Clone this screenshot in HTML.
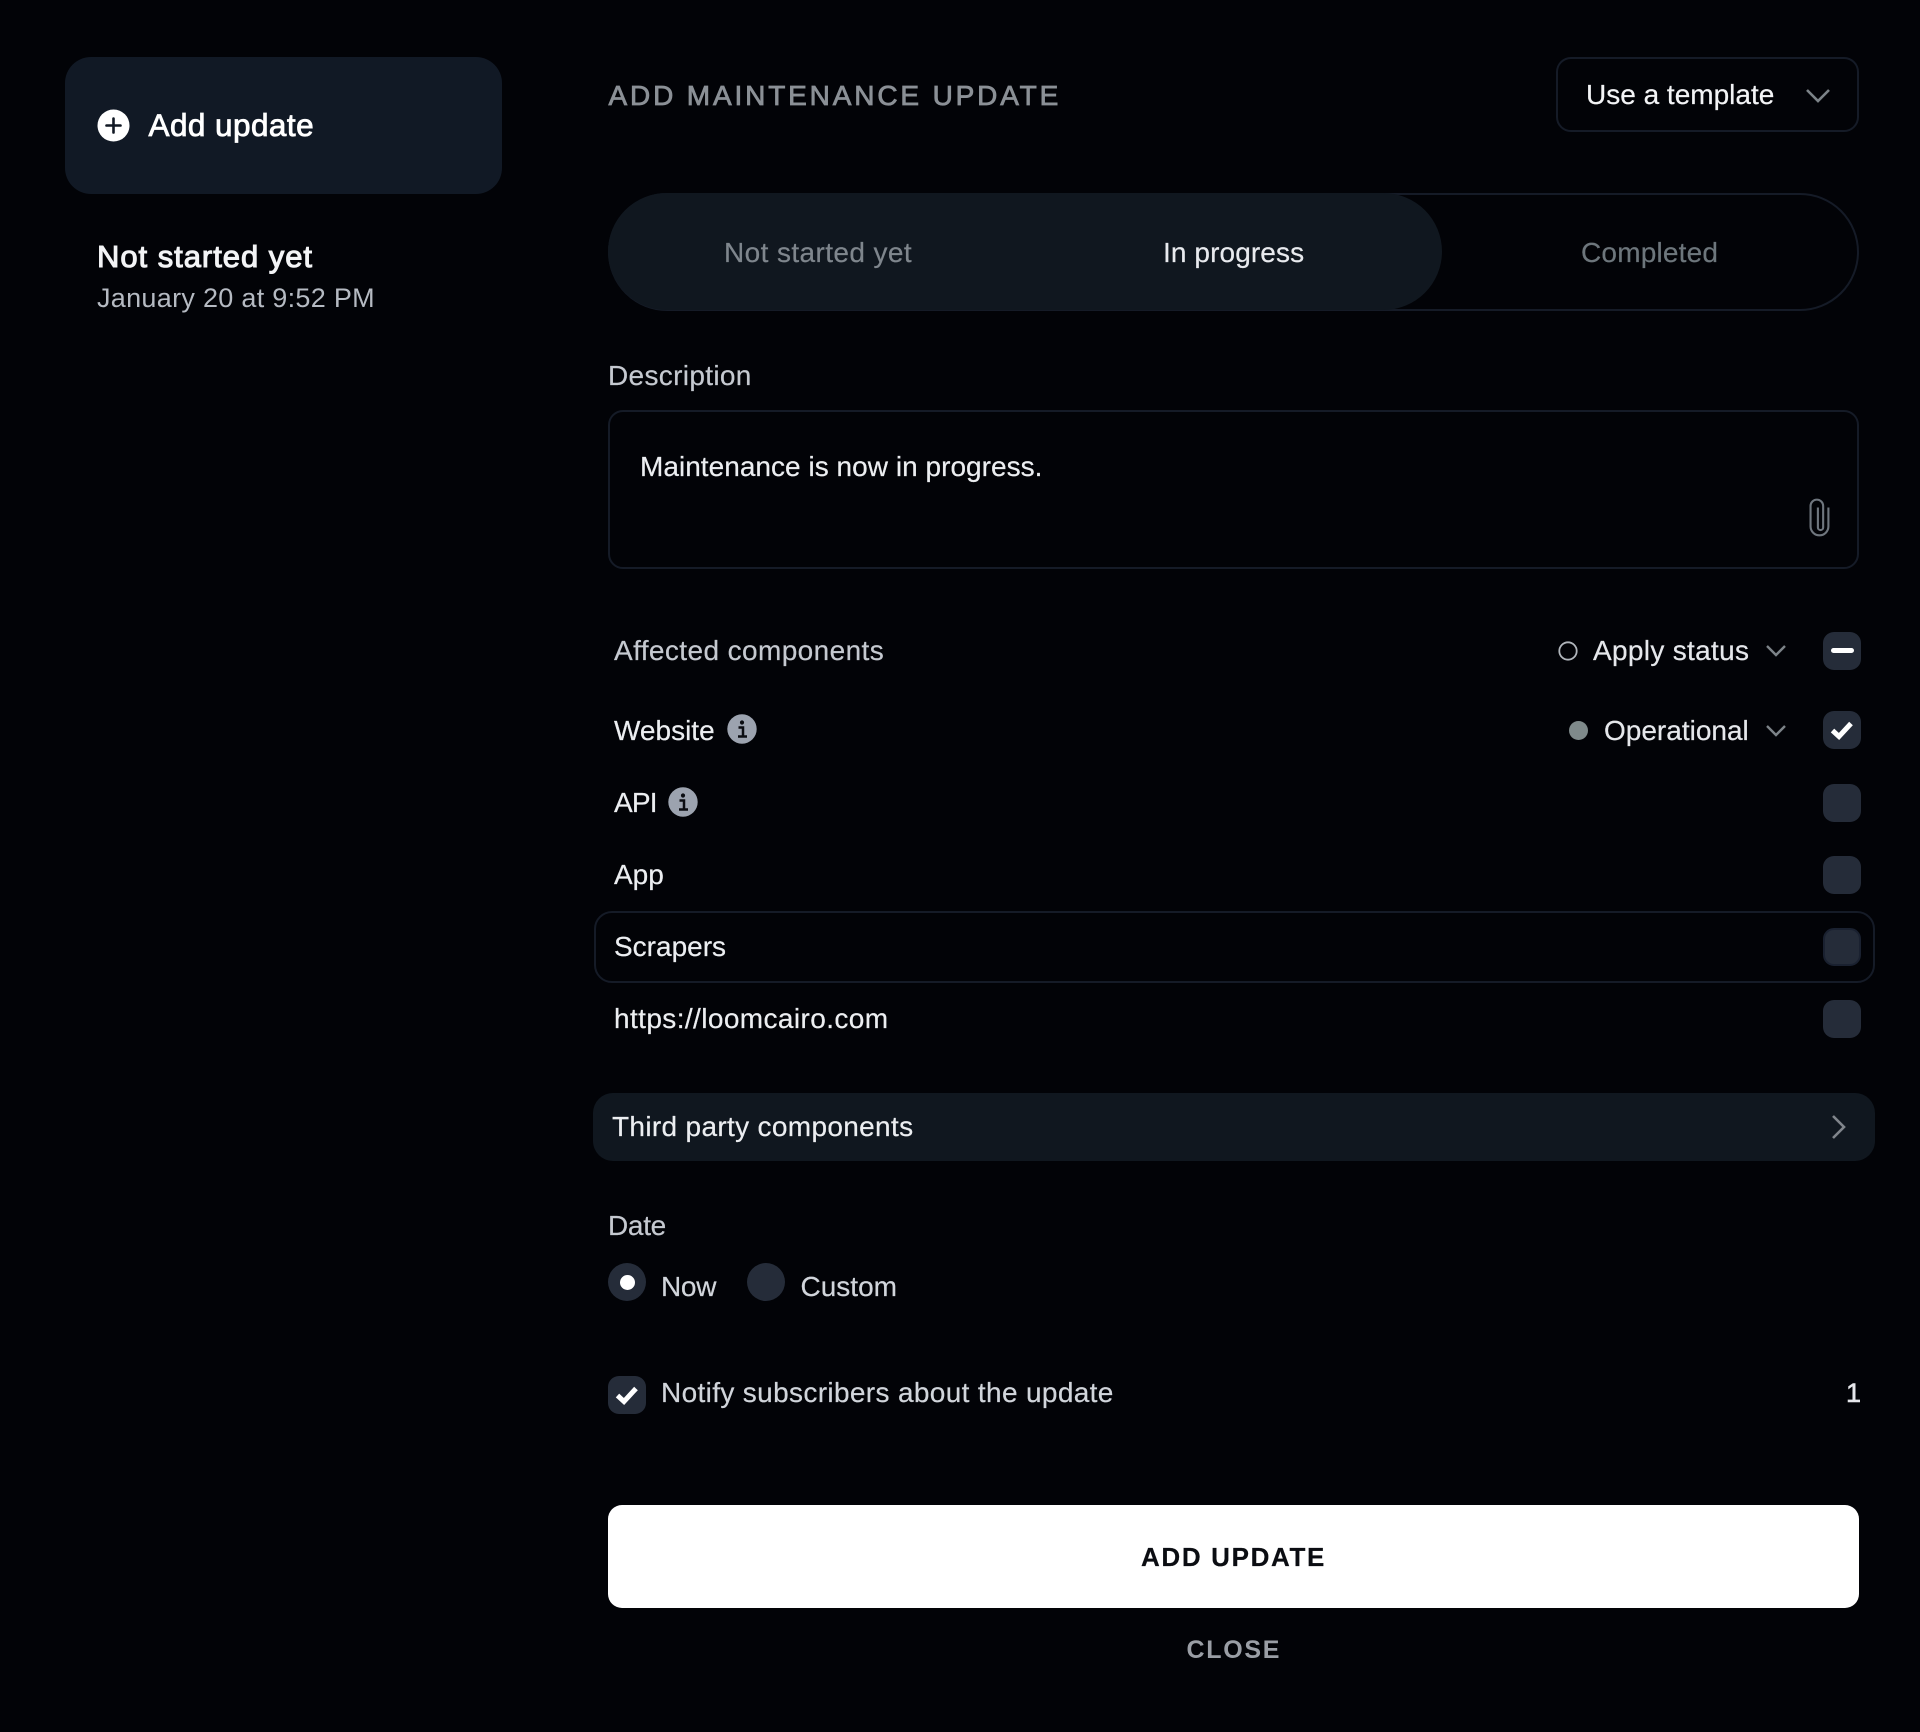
<!DOCTYPE html>
<html lang="en">
<head>
<meta charset="utf-8">
<title>Add maintenance update</title>
<style>
html,body{margin:0;padding:0;background:#020307;}
body{position:relative;width:1920px;height:1732px;overflow:hidden;font-family:"Liberation Sans",Arial,sans-serif;font-size:28px;color:#e5e7eb;}
.b,.t,svg{position:absolute;display:block;}
.b{box-sizing:border-box;}
.t{white-space:nowrap;height:40px;line-height:40px;-webkit-text-stroke:.2px currentColor;}
.m{-webkit-text-stroke:.6px currentColor;}
.cb{left:1823px;width:38px;height:38px;border-radius:11px;background:#252c39;}
.line{border:2px solid #151b27;}
</style>
</head>
<body>
<div class="b" style="left:65px;top:57px;width:437px;height:136.5px;border-radius:26px;background:#111925"></div>
<svg style="left:97px;top:109px" width="33" height="33" viewBox="0 0 33 33"><circle cx="16.5" cy="16.5" r="16" fill="#fff"/><path d="M16.5 9.5v14M9.5 16.5h14" stroke="#111824" stroke-width="2.6" stroke-linecap="round"/></svg>
<span class="t m" style="left:148.5px;top:105px;font-size:31.5px;letter-spacing:.44px;-webkit-text-stroke-width:.8px;color:#fff">Add update</span>
<span class="t m" style="left:97px;top:237px;font-size:31px;letter-spacing:.96px;-webkit-text-stroke-width:1.05px;color:#f3f4f6">Not started yet</span>
<span class="t" style="left:97px;top:278px;font-size:27px;letter-spacing:.3px;-webkit-text-stroke-width:0;color:#b5bac2">January 20 at 9:52 PM</span>

<span class="t m" style="left:608.5px;top:76px;letter-spacing:2.85px;-webkit-text-stroke-width:.8px;color:#8b9096">ADD MAINTENANCE UPDATE</span>
<div class="b line" style="left:1556px;top:57px;width:303px;height:75px;border-radius:15px"></div>
<span class="t" style="left:1586px;top:75px;color:#f3f4f6">Use a template</span>
<svg style="left:1800px;top:80px" width="36" height="30" viewBox="0 0 36 30"><path d="M7 10l11 11 11-11" fill="none" stroke="#7c8388" stroke-width="2.6"/></svg>

<div class="b line" style="left:608px;top:193px;width:1251px;height:118px;border-radius:59px"></div>
<div class="b" style="left:608px;top:193px;width:834px;height:117px;border-radius:59px;background:#10171f"></div>
<span class="t" style="left:724px;top:232.5px;letter-spacing:.4px;color:#7f868d">Not started yet</span>
<span class="t" style="left:1163px;top:232.5px;letter-spacing:.1px;color:#e8eaee">In progress</span>
<span class="t" style="left:1581px;top:232.5px;letter-spacing:.2px;color:#6d767c">Completed</span>

<span class="t" style="left:608px;top:356px;letter-spacing:.33px;color:#c5c9d0">Description</span>
<div class="b line" style="left:608px;top:410px;width:1251px;height:159px;border-radius:15px"></div>
<span class="t" style="left:640px;top:447px;letter-spacing:.03px;color:#eceef1">Maintenance is now in progress.</span>
<svg style="left:1807px;top:497px" width="26" height="42" viewBox="0 0 24 40"><path d="M20 10v18a8.5 8.5 0 0 1-17 0V8.5a6 6 0 0 1 12 0V29a2.5 2.5 0 0 1-5 0V10" fill="none" stroke="#6f767e" stroke-width="2"/></svg>

<span class="t" style="left:614px;top:631px;letter-spacing:.4px;color:#c5c9d0">Affected components</span>
<svg style="left:1557px;top:640px" width="22" height="22" viewBox="0 0 22 22"><circle cx="11" cy="11" r="8.7" fill="none" stroke="#b0b5bb" stroke-width="1.8"/></svg>
<span class="t" style="left:1593px;top:631px;letter-spacing:.32px;color:#e5e7eb">Apply status</span>
<svg style="left:1762px;top:640px" width="28" height="22" viewBox="0 0 28 22"><path d="M5 6l9 9 9-9" fill="none" stroke="#7c8388" stroke-width="2.4"/></svg>
<div class="b cb" style="top:632px"></div>
<div class="b" style="left:1831px;top:648px;width:23px;height:5px;border-radius:3px;background:#fff"></div>

<span class="t" style="left:614px;top:711px;color:#eceef1">Website</span>
<svg style="left:727px;top:714px" width="30" height="30" viewBox="0 0 30 30"><circle cx="15" cy="15" r="14.7" fill="#9ca3af"/><circle cx="15" cy="8.5" r="2.1" fill="#0b0d12"/><path d="M11.5 13.5H16V22M11 22.5h9" fill="none" stroke="#0b0d12" stroke-width="2.5"/></svg>
<svg style="left:1568px;top:720px" width="21" height="21" viewBox="0 0 21 21"><circle cx="10.5" cy="10.5" r="9.5" fill="#7f8a8b"/></svg>
<span class="t" style="left:1604px;top:711px;color:#e5e7eb">Operational</span>
<svg style="left:1762px;top:720px" width="28" height="22" viewBox="0 0 28 22"><path d="M5 6l9 9 9-9" fill="none" stroke="#7c8388" stroke-width="2.4"/></svg>
<div class="b cb" style="top:711px"></div>
<svg style="left:1823px;top:711px" width="38" height="38" viewBox="0 0 38 38"><path d="M9.5 19.5l6.5 6L28 12.5" fill="none" stroke="#fff" stroke-width="5"/></svg>

<span class="t" style="left:614px;top:783px;letter-spacing:-.8px;color:#eceef1">API</span>
<svg style="left:668px;top:787px" width="30" height="30" viewBox="0 0 30 30"><circle cx="15" cy="15" r="14.7" fill="#9ca3af"/><circle cx="15" cy="8.5" r="2.1" fill="#0b0d12"/><path d="M11.5 13.5H16V22M11 22.5h9" fill="none" stroke="#0b0d12" stroke-width="2.5"/></svg>
<div class="b cb" style="top:783.5px"></div>

<span class="t" style="left:614px;top:855px;color:#eceef1">App</span>
<div class="b cb" style="top:855.5px"></div>

<div class="b line" style="left:593.5px;top:910.5px;width:1281px;height:72px;border-radius:18px"></div>
<span class="t" style="left:614px;top:927px;color:#eceef1">Scrapers</span>
<div class="b cb" style="top:927.5px;border:2px solid #1a2130"></div>

<span class="t" style="left:614px;top:999px;letter-spacing:.4px;color:#eceef1">https://loomcairo.com</span>
<div class="b cb" style="top:999.5px"></div>

<div class="b" style="left:593px;top:1093px;width:1282px;height:68px;border-radius:20px;background:#10171f"></div>
<span class="t" style="left:612px;top:1107px;letter-spacing:.33px;color:#eceef1">Third party components</span>
<svg style="left:1826px;top:1112px" width="24" height="30" viewBox="0 0 24 30"><path d="M7 4l11 11L7 26" fill="none" stroke="#80858b" stroke-width="2.6"/></svg>

<span class="t" style="left:608px;top:1206px;letter-spacing:-.3px;color:#c5c9d0">Date</span>
<div class="b" style="left:608px;top:1263px;width:38px;height:38px;border-radius:50%;background:#252c39"></div>
<div class="b" style="left:619.5px;top:1274.5px;width:15px;height:15px;border-radius:50%;background:#fff"></div>
<span class="t" style="left:661px;top:1267px;letter-spacing:-.3px;color:#d1d5db">Now</span>
<div class="b" style="left:747px;top:1263px;width:38px;height:38px;border-radius:50%;background:#252c39"></div>
<span class="t" style="left:800.5px;top:1267px;color:#d1d5db">Custom</span>

<div class="b" style="left:608px;top:1376px;width:38px;height:38px;border-radius:11px;background:#252c39"></div>
<svg style="left:608px;top:1376px" width="38" height="38" viewBox="0 0 38 38"><path d="M9.5 19.5l6.5 6L28 12.5" fill="none" stroke="#fff" stroke-width="5"/></svg>
<span class="t" style="left:661px;top:1373px;letter-spacing:.35px;color:#d1d5db">Notify subscribers about the update</span>
<span class="t m" style="left:1846px;top:1373px;font-size:27px;color:#e5e7eb">1</span>

<div class="b" style="left:608px;top:1505px;width:1251px;height:103px;border-radius:14px;background:#fff"></div>
<span class="t" style="left:1141px;top:1536.5px;font-size:26px;font-weight:700;letter-spacing:1.65px;color:#0b0d12">ADD UPDATE</span>
<span class="t" style="left:1186.5px;top:1630px;font-size:25px;font-weight:700;letter-spacing:1.7px;-webkit-text-stroke-width:0;color:#9a9ea5">CLOSE</span>
</body>
</html>
